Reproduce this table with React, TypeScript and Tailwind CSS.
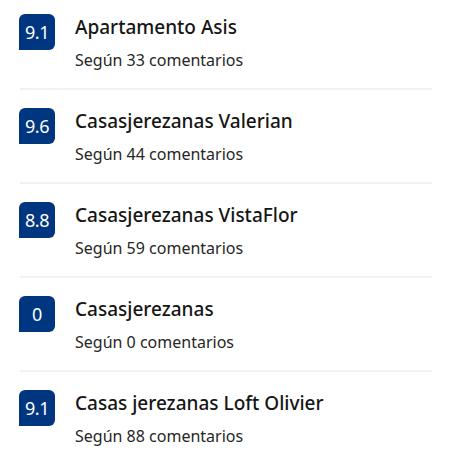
const hotels = [
  { score: '9.1', name: 'Apartamento Asis', reviews: 33 },
  { score: '9.6', name: 'Casasjerezanas Valerian', reviews: 44 },
  { score: '8.8', name: 'Casasjerezanas VistaFlor', reviews: 59 },
  { score: '0', name: 'Casasjerezanas', reviews: 0 },
  { score: '9.1', name: 'Casas jerezanas Loft Olivier', reviews: 88 },
]

export default function App() {
  return (
    <div className="w-[450px] h-[450px] overflow-hidden bg-white font-['Noto_Sans','Roboto',sans-serif]">
      <div className="-mt-1">
        {hotels.map((h, i) => (
          <div key={i} className="h-[94px] flex flex-col">
            <div className="flex flex-1 pt-[18px] pl-[19px]">
              {/* nota */}
              <div className="w-9 h-9 shrink-0 rounded-[6px] rounded-bl-none bg-[#003580] text-white flex items-center justify-center text-[18px] tracking-[-0.5px]">
                {h.score}
              </div>
              <div className="ml-5">
                <div className="text-[19px] leading-6 mt-[1px] font-medium text-[#151515]">{h.name}</div>
                <div className="text-[16px] leading-5 mt-[11px] text-[#262626]">
                  Según {h.reviews} comentarios
                </div>
              </div>
            </div>
            <div className="h-[2px] ml-5 mr-[18px] bg-[#f2f2f2]" />
          </div>
        ))}
      </div>
    </div>
  )
}
